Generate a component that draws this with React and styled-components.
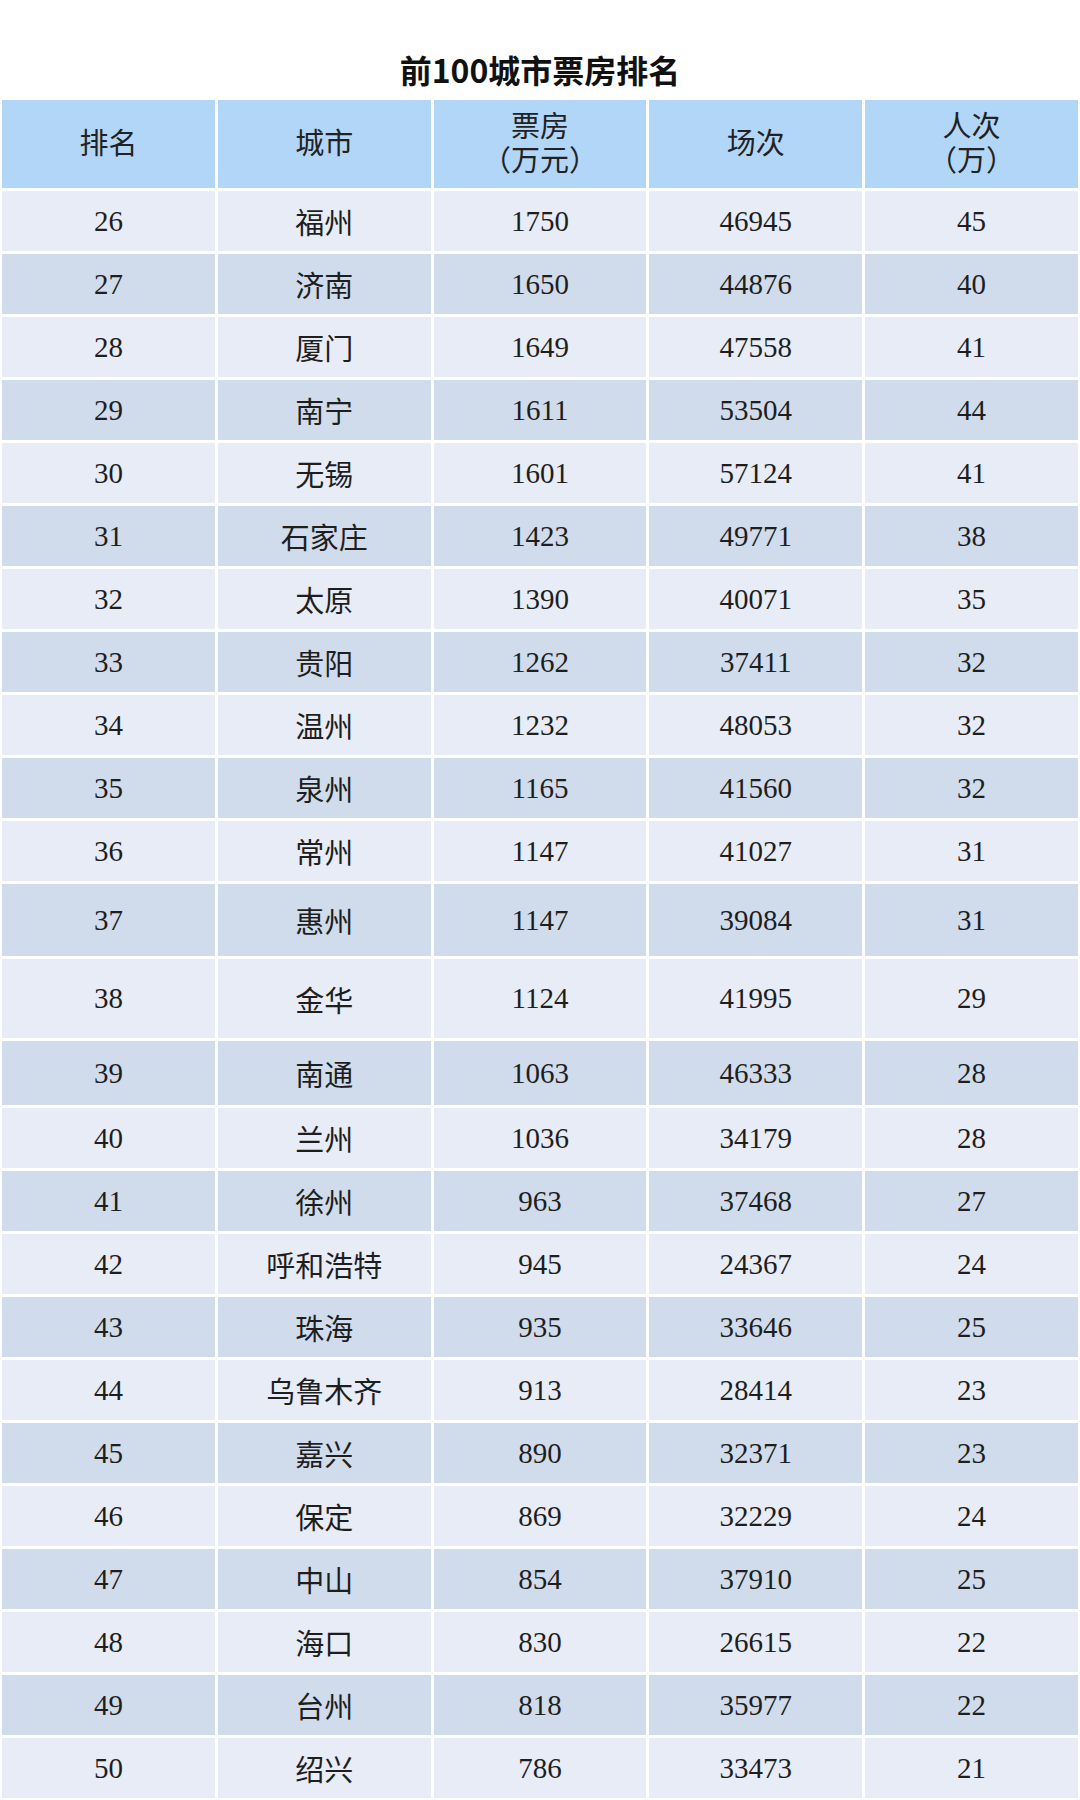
import styled, { createGlobalStyle } from 'styled-components';

const rows = [
  ['26', '福州', '1750', '46945', '45'],
  ['27', '济南', '1650', '44876', '40'],
  ['28', '厦门', '1649', '47558', '41'],
  ['29', '南宁', '1611', '53504', '44'],
  ['30', '无锡', '1601', '57124', '41'],
  ['31', '石家庄', '1423', '49771', '38'],
  ['32', '太原', '1390', '40071', '35'],
  ['33', '贵阳', '1262', '37411', '32'],
  ['34', '温州', '1232', '48053', '32'],
  ['35', '泉州', '1165', '41560', '32'],
  ['36', '常州', '1147', '41027', '31'],
  ['37', '惠州', '1147', '39084', '31', 72],
  ['38', '金华', '1124', '41995', '29', 79],
  ['39', '南通', '1063', '46333', '28', 64],
  ['40', '兰州', '1036', '34179', '28'],
  ['41', '徐州', '963', '37468', '27'],
  ['42', '呼和浩特', '945', '24367', '24'],
  ['43', '珠海', '935', '33646', '25'],
  ['44', '乌鲁木齐', '913', '28414', '23'],
  ['45', '嘉兴', '890', '32371', '23'],
  ['46', '保定', '869', '32229', '24'],
  ['47', '中山', '854', '37910', '25'],
  ['48', '海口', '830', '26615', '22'],
  ['49', '台州', '818', '35977', '22'],
  ['50', '绍兴', '786', '33473', '21'],
];

const GlobalStyle = createGlobalStyle`
  html, body {
    margin: 0;
    padding: 0;
    background: #ffffff;
  }
`;

const Page = styled.div`
  width: 1080px;
  height: 1800px;
  display: flex;
  flex-direction: column;
  background: #ffffff;
  overflow: hidden;
`;

const Title = styled.h1`
  margin: 0;
  padding: 48px 0 10px 0;
  height: 42px;
  line-height: 42px;
  text-align: center;
  font-family: 'Noto Sans CJK SC', 'Noto Sans', sans-serif;
  font-weight: 700;
  font-size: 32px;
  color: #111111;
`;

const Table = styled.div`
  display: flex;
  flex-direction: column;
  gap: 3px;
  padding: 0 2px;
`;

const Row = styled.div`
  display: grid;
  grid-template-columns: repeat(5, 1fr);
  column-gap: 3px;
  height: ${(p) => p.$h}px;
`;

const Cell = styled.div`
  display: flex;
  flex-direction: column;
  align-items: center;
  justify-content: center;
  background: ${(p) => (p.$dark ? '#d0dcec' : '#e8ecf6')};
  font-family: 'Liberation Serif', 'Noto Sans CJK SC', serif;
  font-size: 29px;
  color: #1e1e1e;
`;

const HeadCell = styled(Cell)`
  background: #b2d6f8;
  font-size: 29px;
  line-height: 34px;
  color: #222222;
`;

const App = () => {
  return (
    <Page>
      <GlobalStyle />
      <Title>前100城市票房排名</Title>
      <Table>
        <Row $h={88}>
          <HeadCell>排名</HeadCell>
          <HeadCell>城市</HeadCell>
          <HeadCell>
            <span>票房</span>
            <span>（万元）</span>
          </HeadCell>
          <HeadCell>场次</HeadCell>
          <HeadCell>
            <span>人次</span>
            <span>（万）</span>
          </HeadCell>
        </Row>
        {rows.map((r, i) => (
          <Row key={r[0]} $h={r[5] || 60}>
            {r.slice(0, 5).map((v, j) => (
              <Cell key={j} $dark={i % 2 === 1}>
                {v}
              </Cell>
            ))}
          </Row>
        ))}
      </Table>
    </Page>
  );
};

export default App;
